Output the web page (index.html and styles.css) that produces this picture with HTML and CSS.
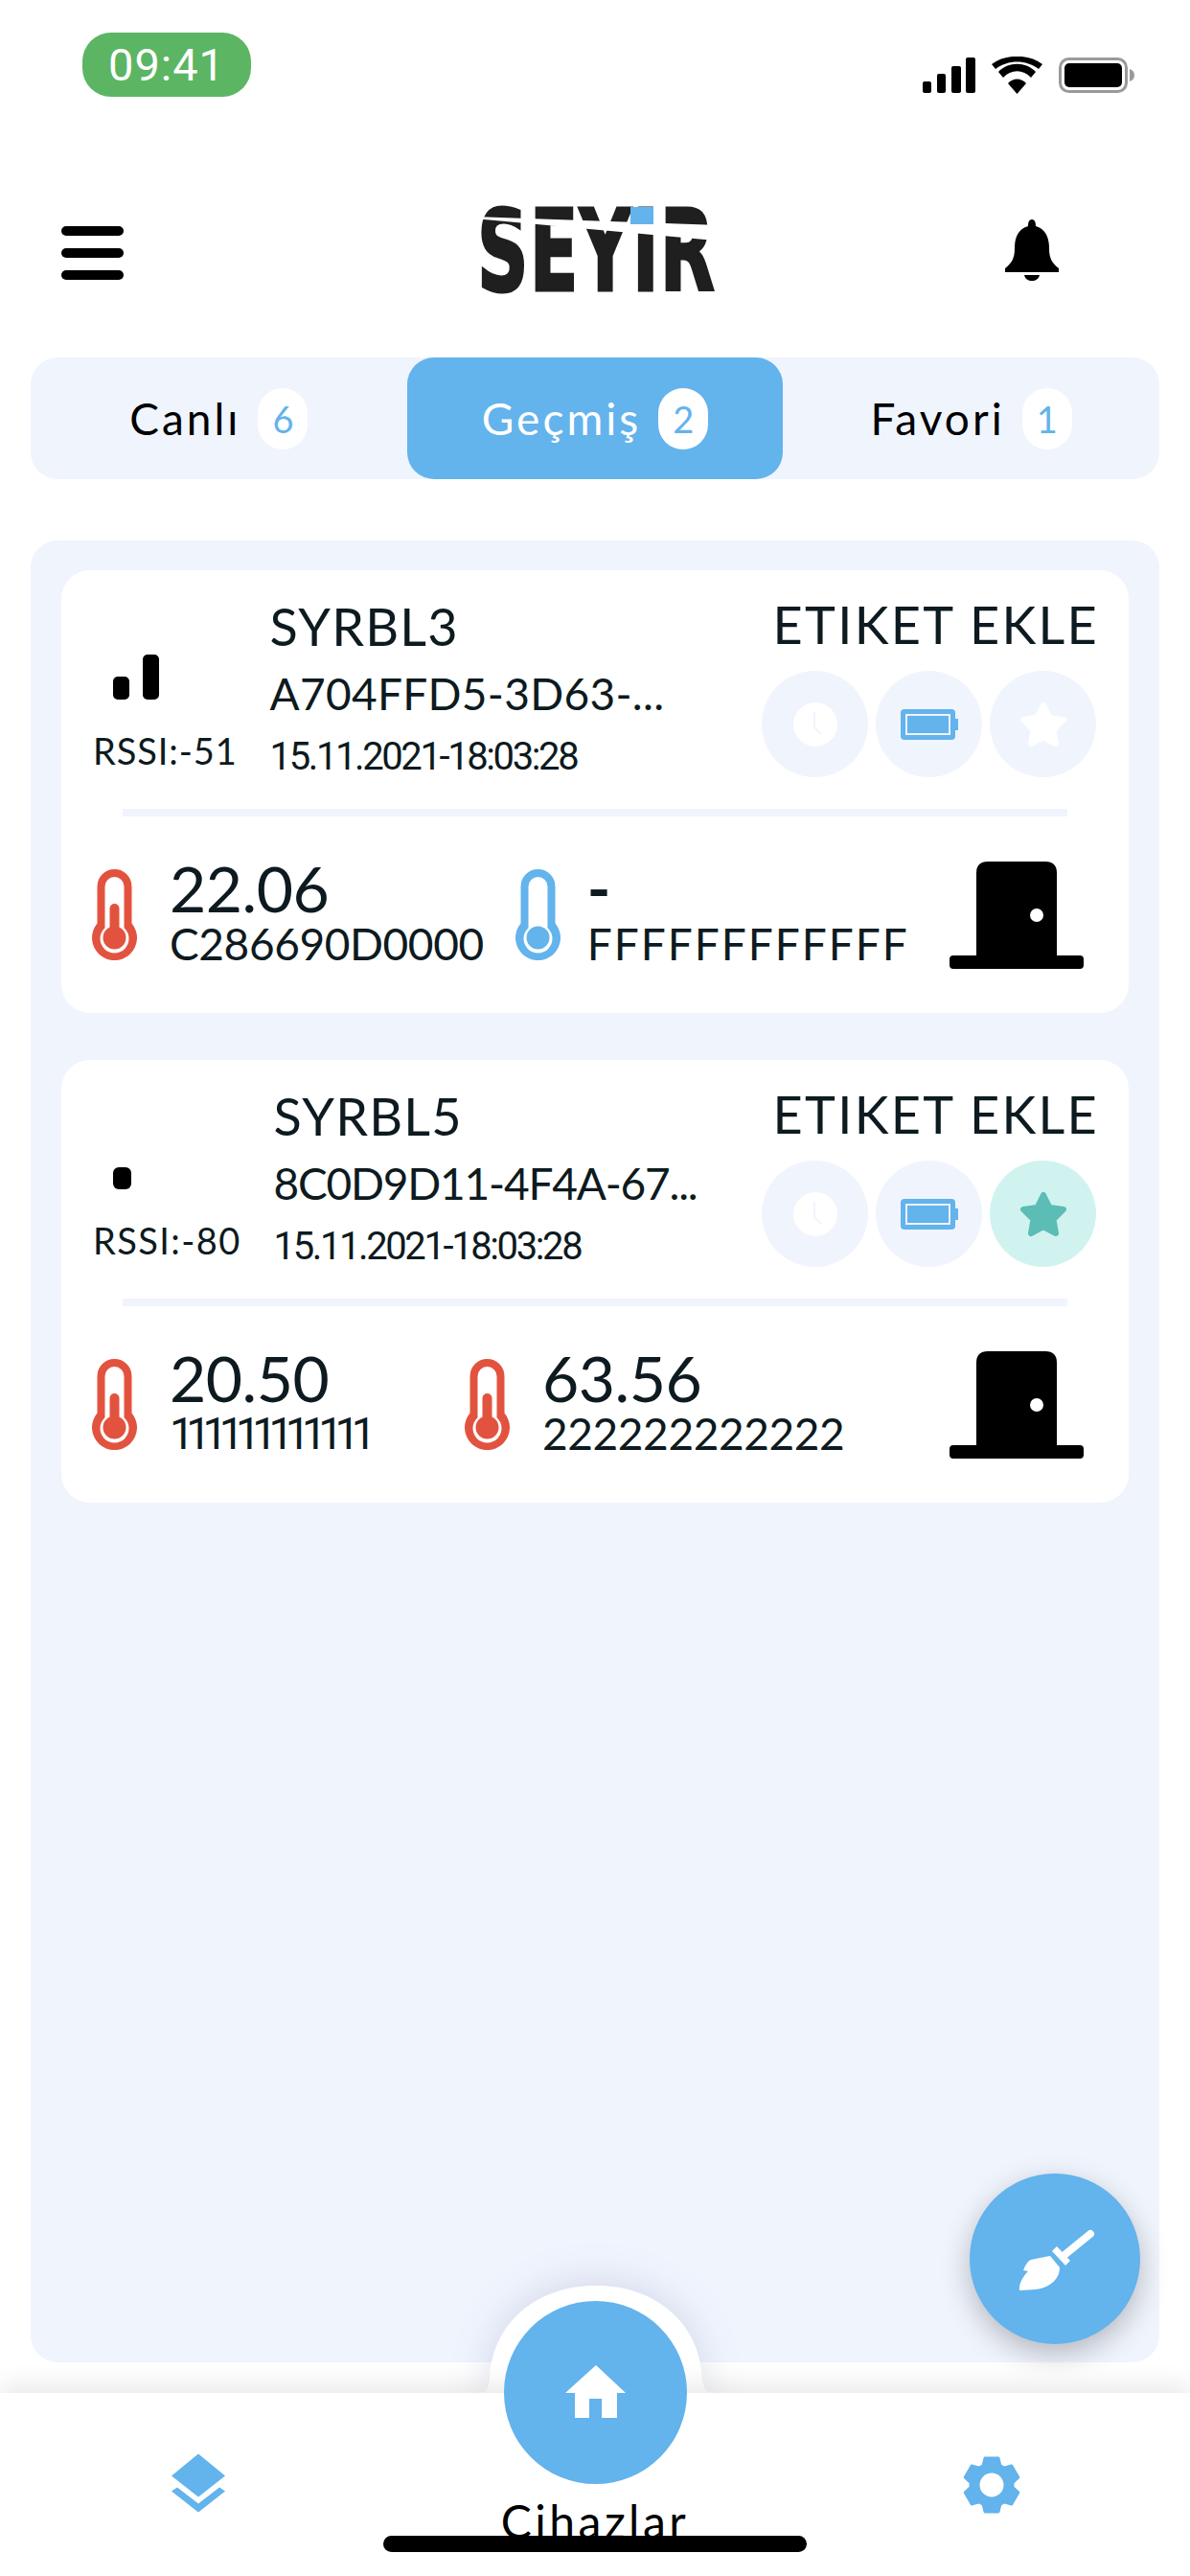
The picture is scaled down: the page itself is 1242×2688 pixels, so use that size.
FILE: index.html
```html
<!DOCTYPE html>
<html>
    <head>
        <title>Seyir</title>
        <meta charset="utf-8">
        <link rel="stylesheet" href="styles.css">
    </head>
    <body>
        <div class="screen">

            <div class="status">
                <div class="status-time">09:41</div>
                <div class="status-icons">
                    <svg width="55" height="37" viewBox="0 0 55 37"><rect x="0" y="25" width="9" height="12" rx="2"/><rect x="15" y="17" width="9" height="20" rx="2"/><rect x="30" y="9" width="10" height="28" rx="2"/><rect x="45" y="0" width="10" height="37" rx="2"/></svg>
                    <svg width="53" height="39" viewBox="0 0 53 39"><path d="M26.500 39 L17 28 C22 22 31 22 36 28 Z"/><path d="M12 22 L7 16 C17 5 36 5 46 16 L41 22 C33 13 20 13 12 22 Z"/><path d="M4 13 L0 8 C14 -3 39 -3 53 8 L49 13 C36 3 17 3 4 13 Z"/></svg>
                    <svg width="79" height="37" viewBox="0 0 79 37"><rect x="1.500" y="1.500" width="69" height="34" rx="9" fill="none" stroke="#9a9a9a" stroke-width="3"/><rect x="6" y="6" width="60" height="25" rx="5"/><path d="M74 12 C77 13 79 15 79 18.500 C79 22 77 24 74 25 Z" fill="#9a9a9a"/></svg>
                </div>
            </div>

            <div class="header">
                <div class="menu-icon">
                    <div></div>
                    <div></div>
                    <div></div>
                </div>
                <div class="logo">
                    <span class="logo-text">SEYIR</span>
                    <svg class="logo-cut" width="246" height="93" viewBox="0 0 246 93"><path d="M-4 12 L250 21 L250 37 L-4 14 Z" fill="#fff"/><rect x="160" y="2" width="24" height="18" fill="#63b3ec"/></svg>
                </div>
                <svg class="bell" width="56" height="64" viewBox="0 0 56 64"><path d="M28 0 C31 0 32 3 32 7 C43 10 46 20 46 30 C46 42 50 46 56 51 L56 55 L0 55 L0 51 C6 46 10 42 10 30 C10 20 13 10 24 7 C24 3 25 0 28 0 Z"/><path d="M20 58 L36 58 C35 62 32 64 28 64 C24 64 21 62 20 58 Z"/></svg>
            </div>

            <div class="tabs">
                <div class="tab"><span class="tab-name">Canlı</span> <span class="tab-count">6</span></div>
                <div class="tab tab-active"><span class="tab-name">Geçmiş</span> <span class="tab-count">2</span></div>
                <div class="tab"><span class="tab-name">Favori</span> <span class="tab-count">1</span></div>
            </div>

            <div class="panel">

                <div class="card">
                    <div class="card-top">
                        <div class="rssi">
                            <svg class="rssi-bars" width="80" height="47" viewBox="0 0 80 47"><rect x="0" y="23" width="17" height="24" rx="5"/><rect x="31" y="0" width="17" height="47" rx="5"/></svg>
                            <div class="rssi-text">RSSI:-51</div>
                        </div>
                        <div class="device">
                            <div class="device-name">SYRBL3</div>
                            <div class="device-id">A704FFD5-3D63-...</div>
                            <div class="device-date">15.11.2021-18:03:28</div>
                        </div>
                        <div class="tag">
                            <div class="tag-title">ETIKET EKLE</div>
                            <div class="tag-icons">
                                <div class="round-icon">
                                    <svg width="46" height="46" viewBox="0 0 46 46"><circle cx="23" cy="23" r="23" fill="#fff"/><path d="M22 10 L22 26 L29 33" fill="none" stroke="#f0f4fd" stroke-width="2"/></svg>
                                </div>
                                <div class="round-icon">
                                    <svg width="60" height="32" viewBox="0 0 60 32"><rect width="57" height="32" rx="4" fill="#63b3ec"/><rect x="57" y="10" width="3" height="12" fill="#63b3ec"/><rect x="6" y="6" width="45" height="20" fill="#63b3ec" stroke="#f0f4fd" stroke-width="2"/></svg>
                                </div>
                                <div class="round-icon">
                                    <svg width="50" height="48" viewBox="0 0 50 48"><path d="M25 4 L31.500 17 L46 19 L35.500 29.500 L38 44 L25 37 L12 44 L14.500 29.500 L4 19 L18.500 17 Z" fill="#fff" stroke="#fff" stroke-width="6" stroke-linejoin="round"/></svg>
                                </div>
                            </div>
                        </div>
                    </div>
                    <div class="card-line"></div>
                    <div class="card-bottom">
                        <div class="sensor">
                            <svg width="47" height="95" viewBox="0 0 47 95"><path d="M5.500 18 a18 18 0 0 1 36 0 V56.500 A23.500 23.500 0 1 1 5.500 56.500 Z" fill="#e2533f"/><path d="M13.500 18 a10 10 0 0 1 20 0 V61.300 A15 15 0 1 1 13.500 61.300 Z" fill="#fff"/><rect x="18.500" y="36" width="10" height="36" rx="5" fill="#e2533f"/><circle cx="23.500" cy="71.500" r="12" fill="#e2533f"/></svg>
                            <div>
                                <div class="sensor-value">22.06</div>
                                <div class="sensor-code">C286690D0000</div>
                            </div>
                        </div>
                        <div class="sensor sensor-tight">
                            <svg width="47" height="95" viewBox="0 0 47 95"><path d="M5.500 18 a18 18 0 0 1 36 0 V56.500 A23.500 23.500 0 1 1 5.500 56.500 Z" fill="#63b3ec"/><path d="M13.500 18 a10 10 0 0 1 20 0 V61.300 A15 15 0 1 1 13.500 61.300 Z" fill="#fff"/><circle cx="23.500" cy="71.500" r="12" fill="#63b3ec"/></svg>
                            <div>
                                <div class="sensor-value value-empty">-</div>
                                <div class="sensor-code code-f">FFFFFFFFFFFF</div>
                            </div>
                        </div>
                        <svg class="door" width="140" height="112" viewBox="0 0 140 112"><path d="M28 98 V12 Q28 0 40 0 H100 Q112 0 112 12 V98 H136 Q140 98 140 102 V108 Q140 112 136 112 H4 Q0 112 0 108 V102 Q0 98 4 98 Z"/><circle cx="91" cy="56" r="7" fill="#fff"/></svg>
                    </div>
                </div>

                <div class="card">
                    <div class="card-top">
                        <div class="rssi">
                            <svg class="rssi-bars" width="80" height="47" viewBox="0 0 80 47"><rect x="0" y="24" width="19" height="23" rx="6"/></svg>
                            <div class="rssi-text rssi-text-wide">RSSI:-80</div>
                        </div>
                        <div class="device">
                            <div class="device-name">SYRBL5</div>
                            <div class="device-id device-id-tight">8C0D9D11-4F4A-67...</div>
                            <div class="device-date">15.11.2021-18:03:28</div>
                        </div>
                        <div class="tag">
                            <div class="tag-title">ETIKET EKLE</div>
                            <div class="tag-icons">
                                <div class="round-icon">
                                    <svg width="46" height="46" viewBox="0 0 46 46"><circle cx="23" cy="23" r="23" fill="#fff"/><path d="M22 10 L22 26 L29 33" fill="none" stroke="#f0f4fd" stroke-width="2"/></svg>
                                </div>
                                <div class="round-icon">
                                    <svg width="60" height="32" viewBox="0 0 60 32"><rect width="57" height="32" rx="4" fill="#63b3ec"/><rect x="57" y="10" width="3" height="12" fill="#63b3ec"/><rect x="6" y="6" width="45" height="20" fill="#63b3ec" stroke="#f0f4fd" stroke-width="2"/></svg>
                                </div>
                                <div class="round-icon round-icon-on">
                                    <svg width="50" height="48" viewBox="0 0 50 48"><path d="M25 4 L31.500 17 L46 19 L35.500 29.500 L38 44 L25 37 L12 44 L14.500 29.500 L4 19 L18.500 17 Z" fill="#5bbdb5" stroke="#5bbdb5" stroke-width="6" stroke-linejoin="round"/></svg>
                                </div>
                            </div>
                        </div>
                    </div>
                    <div class="card-line"></div>
                    <div class="card-bottom">
                        <div class="sensor">
                            <svg width="47" height="95" viewBox="0 0 47 95"><path d="M5.500 18 a18 18 0 0 1 36 0 V56.500 A23.500 23.500 0 1 1 5.500 56.500 Z" fill="#e2533f"/><path d="M13.500 18 a10 10 0 0 1 20 0 V61.300 A15 15 0 1 1 13.500 61.300 Z" fill="#fff"/><rect x="18.500" y="36" width="10" height="36" rx="5" fill="#e2533f"/><circle cx="23.500" cy="71.500" r="12" fill="#e2533f"/></svg>
                            <div>
                                <div class="sensor-value">20.50</div>
                                <div class="sensor-code code-ones">111111111111</div>
                            </div>
                        </div>
                        <div class="sensor">
                            <svg width="47" height="95" viewBox="0 0 47 95"><path d="M5.500 18 a18 18 0 0 1 36 0 V56.500 A23.500 23.500 0 1 1 5.500 56.500 Z" fill="#e2533f"/><path d="M13.500 18 a10 10 0 0 1 20 0 V61.300 A15 15 0 1 1 13.500 61.300 Z" fill="#fff"/><rect x="18.500" y="36" width="10" height="36" rx="5" fill="#e2533f"/><circle cx="23.500" cy="71.500" r="12" fill="#e2533f"/></svg>
                            <div>
                                <div class="sensor-value">63.56</div>
                                <div class="sensor-code">222222222222</div>
                            </div>
                        </div>
                        <svg class="door" width="140" height="112" viewBox="0 0 140 112"><path d="M28 98 V12 Q28 0 40 0 H100 Q112 0 112 12 V98 H136 Q140 98 140 102 V108 Q140 112 136 112 H4 Q0 112 0 108 V102 Q0 98 4 98 Z"/><circle cx="91" cy="56" r="7" fill="#fff"/></svg>
                    </div>
                </div>

            </div>

            <div class="fab">
                <svg width="120" height="110" viewBox="0 0 120 110">
                    <path d="M97 29 L70 51" fill="none" stroke="#fff" stroke-width="8" stroke-linecap="round"/>
                    <path d="M62 42 L76 57 L71 62 L57 47 Z" fill="#fff"/>
                    <path d="M55 52 L65 64 C65 76 55 85 40 87 L23 88 C22 81 27 73 32 68 L27 67 C29 62 32 57 35 56 C43 54 50 53 55 52 Z" fill="#fff"/>
                </svg>
            </div>

            <svg class="nav-bump" width="246" height="122" viewBox="0 0 246 122"><path d="M0 122 V112 C8 112 10 108 12 98 C14 40 60 0 123 0 C186 0 232 40 234 98 C236 108 238 112 246 112 V122 Z" fill="#fff"/></svg>

            <div class="nav">
                <div class="nav-item">
                    <svg width="70" height="70" viewBox="12 12.500 70 70"><path d="M47 15 L75 38 L47 60 L19 38 Z" fill="#63b3ec"/><path d="M19 54 L25 50 L47 67 L69 50 L75 54 L47 76 Z" fill="#63b3ec"/></svg>
                </div>
                <div class="nav-item nav-item-main">
                    <div class="nav-label">Cihazlar</div>
                    <div class="home-btn">
                        <svg width="63" height="55" viewBox="0 0 63 55"><path d="M32 0 L63 29 H54 V55 H38 V35 H25 V55 H10 V29 H0 Z" fill="#fff"/></svg>
                    </div>
                </div>
                <div class="nav-item">
                    <svg width="70" height="70" viewBox="-35 -35 70 70">
                        <g fill="#63b3ec" stroke="#63b3ec" stroke-width="3" stroke-linejoin="round">
                            <circle r="22"/>
                            <path d="M-9 -20 L-7 -28 H7 L9 -20 Z"/>
                            <path d="M-9 -20 L-7 -28 H7 L9 -20 Z" transform="rotate(60)"/>
                            <path d="M-9 -20 L-7 -28 H7 L9 -20 Z" transform="rotate(120)"/>
                            <path d="M-9 -20 L-7 -28 H7 L9 -20 Z" transform="rotate(180)"/>
                            <path d="M-9 -20 L-7 -28 H7 L9 -20 Z" transform="rotate(240)"/>
                            <path d="M-9 -20 L-7 -28 H7 L9 -20 Z" transform="rotate(300)"/>
                        </g>
                        <circle r="12.500" fill="#fff"/>
                    </svg>
                </div>
                <div class="home-bar"></div>
            </div>

        </div>
    </body>
</html>
```

FILE: styles.css
```css
body {
    margin: 0;
    background-color: #fff;
}
.screen {
    position: relative;
    display: flex;
    flex-direction: column;
    width: 1242px;
    height: 2688px;
    overflow: hidden;
    font-family: "Lato", sans-serif;
    color: #0d1a20;
}

/* status bar */
.status {
    display: flex;
    justify-content: space-between;
    align-items: flex-start;
    height: 148px;
    padding: 34px 58px 0 86px;
    box-sizing: border-box;
}
.status-time {
    width: 176px;
    height: 67px;
    border-radius: 30px;
    background-color: #5cb562;
    color: #fff;
    font-family: "Roboto", sans-serif;
    font-size: 47px;
    letter-spacing: 1px;
    line-height: 67px;
    text-align: center;
}
.status-icons {
    display: flex;
    align-items: center;
    gap: 17px;
    margin-top: 25px;
}

/* header */
.header {
    display: grid;
    grid-template-columns: 1fr auto 1fr;
    align-items: center;
    height: 225px;
    padding: 0 64px;
    box-sizing: border-box;
}
.menu-icon {
    display: flex;
    flex-direction: column;
    gap: 13px;
    width: 65px;
    margin-top: 7px;
}
.menu-icon div {
    height: 10px;
    border-radius: 5px;
    background-color: #000;
}
.logo {
    position: relative;
    width: 246px;
    height: 93px;
}
.logo-text {
    display: block;
    width: 246px;
    padding-top: 2px;
    color: #1f1f1f;
    font-family: "DejaVu Sans", sans-serif;
    font-weight: bold;
    font-size: 118px;
    line-height: 93px;
    letter-spacing: 2px;
    white-space: nowrap;
    transform: scaleX(0.63);
    transform-origin: left center;
    -webkit-text-stroke: 3px #1f1f1f;
}
.logo-cut {
    position: absolute;
    top: 0;
    left: 0;
}
.bell {
    justify-self: end;
    margin-right: 73px;
}

/* tabs */
.tabs {
    display: grid;
    grid-template-columns: 1fr 1fr 1fr;
    height: 127px;
    margin: 0 32px;
    border-radius: 28px;
    background-color: #f0f4fd;
}
.tab {
    display: flex;
    justify-content: center;
    align-items: center;
    gap: 18px;
    border-radius: 28px;
    color: #000;
    font-size: 46px;
}
.tab-name {
    letter-spacing: 3px;
}
.tab-active {
    background-color: #63b3ec;
    color: #fff;
}
.tab-count {
    min-width: 28px;
    padding: 0 12px;
    border-radius: 26px;
    background-color: #fff;
    color: #63b3ec;
    font-size: 38px;
    line-height: 64px;
    text-align: center;
}

/* list */
.panel {
    flex: 1;
    display: flex;
    flex-direction: column;
    gap: 49px;
    margin: 64px 32px 0;
    padding: 31px 32px;
    border-radius: 28px;
    background-color: #f0f4fd;
}
.card {
    height: 462px;
    border-radius: 30px;
    background-color: #fff;
}
.card-top {
    display: flex;
    height: 249px;
    padding: 31px 34px 0 33px;
    box-sizing: border-box;
}
.rssi {
    display: flex;
    flex-direction: column;
    min-width: 150px;
    margin-right: 34px;
}
.rssi-bars {
    margin: 57px 0 30px 21px;
}
.rssi-text {
    font-size: 38px;
    letter-spacing: 0.9px;
    line-height: 46px;
}
.rssi-text-wide {
    letter-spacing: 1.4px;
}
.device-name {
    font-size: 54px;
    letter-spacing: 1.2px;
    line-height: 56px;
}
.device-id {
    margin-top: 14px;
    font-size: 46px;
    letter-spacing: 0.3px;
    line-height: 56px;
}
.device-id-tight {
    letter-spacing: -1.2px;
}
.device-date {
    margin-top: 14px;
    font-family: "Roboto", sans-serif;
    font-size: 40px;
    letter-spacing: -2.4px;
    line-height: 48px;
}
.tag {
    margin-left: auto;
}
.tag-title {
    margin: -2px -3px 2px 0;
    font-size: 54px;
    letter-spacing: 2.3px;
    line-height: 56px;
    text-align: right;
}
.tag-icons {
    display: flex;
    gap: 8px;
    margin-top: 20px;
}
.round-icon {
    display: flex;
    justify-content: center;
    align-items: center;
    width: 111px;
    height: 111px;
    border-radius: 50%;
    background-color: #f0f4fd;
}
.round-icon-on {
    background-color: #d0f3f0;
}
.card-line {
    height: 8px;
    margin: 0 64px;
    background-color: #f0f4fd;
}
.card-bottom {
    display: flex;
    align-items: center;
    gap: 33px;
    height: 205px;
    padding: 0 47px 0 32px;
    box-sizing: border-box;
}
.sensor {
    display: flex;
    align-items: center;
    gap: 34px;
    min-width: 356px;
}
.sensor-tight {
    gap: 28px;
}
.sensor-value {
    margin-top: -3px;
    font-size: 66px;
    letter-spacing: -0.5px;
    line-height: 64px;
}
.value-empty {
    font-weight: bold;
}
.sensor-code {
    font-size: 46px;
    letter-spacing: -0.4px;
    line-height: 52px;
}
.code-f {
    letter-spacing: 2px;
}
.code-ones {
    font-family: "Roboto", sans-serif;
    letter-spacing: -8.6px;
}
.door {
    margin-left: auto;
}

/* floating button */
.fab {
    position: absolute;
    right: 52px;
    bottom: 242px;
    display: flex;
    justify-content: center;
    align-items: center;
    width: 178px;
    height: 178px;
    border-radius: 50%;
    background-color: #63b3ec;
    box-shadow: 0 10px 30px rgba(0, 0, 0, 0.25);
    z-index: 3;
}

/* bottom nav */
.nav-bump {
    position: absolute;
    left: 499px;
    top: 2385px;
    filter: drop-shadow(0 -4px 20px rgba(40, 60, 120, 0.14));
    z-index: 1;
}
.nav {
    position: relative;
    display: grid;
    grid-template-columns: 1fr 1fr 1fr;
    align-items: center;
    justify-items: center;
    height: 191px;
    margin-top: 32px;
    background-color: #fff;
    box-shadow: 0 -8px 24px rgba(0, 0, 0, 0.09);
    z-index: 2;
}
.nav-item {
    display: flex;
}
.nav-item-main {
    position: relative;
    display: block;
    align-self: start;
    width: 100%;
    text-align: center;
}
.nav-label {
    margin-top: 111px;
    color: #000;
    font-size: 48px;
    letter-spacing: 3.5px;
    line-height: 46px;
}
.home-btn {
    position: absolute;
    left: 112px;
    top: -96px;
    display: flex;
    justify-content: center;
    align-items: center;
    width: 191px;
    height: 191px;
    border-radius: 50%;
    background-color: #63b3ec;
}
.home-btn svg {
    margin-bottom: 2px;
}
.home-bar {
    position: absolute;
    left: 400px;
    bottom: 25px;
    width: 442px;
    height: 17px;
    border-radius: 9px;
    background-color: #000;
}
```
